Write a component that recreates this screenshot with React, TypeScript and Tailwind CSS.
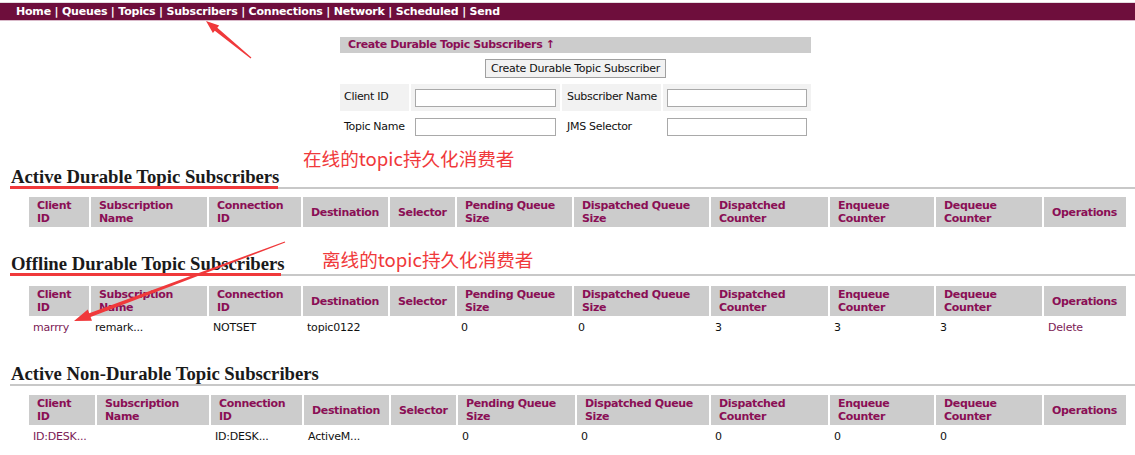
import React from "react";

const RED = "#f0393b";

function arrowPoints(tail: [number, number], tip: [number, number], w0: number, w1: number, headLen: number, headW: number) {
  const dx = tip[0] - tail[0];
  const dy = tip[1] - tail[1];
  const len = Math.hypot(dx, dy);
  const ux = dx / len;
  const uy = dy / len;
  const px = -uy;
  const py = ux;
  const bx = tip[0] - ux * headLen;
  const by = tip[1] - uy * headLen;
  const pts: [number, number][] = [
    [tail[0] + px * w0 / 2, tail[1] + py * w0 / 2],
    [bx + px * w1 / 2, by + py * w1 / 2],
    [bx + px * headW / 2, by + py * headW / 2],
    [tip[0], tip[1]],
    [bx - px * headW / 2, by - py * headW / 2],
    [bx - px * w1 / 2, by - py * w1 / 2],
    [tail[0] - px * w0 / 2, tail[1] - py * w0 / 2],
  ];
  return pts.map((p) => `${p[0].toFixed(1)},${p[1].toFixed(1)}`).join(" ");
}

function Th({ children, w }: { children: React.ReactNode; w: string }) {
  return (
    <th className={`${w} bg-[#cccccc] text-[#8a0f55] font-bold text-left align-middle px-[8px] py-[2px] leading-[13px] h-[29px] tracking-[-0.35px] whitespace-nowrap`}>
      {children}
    </th>
  );
}

function Table({ widths, rows }: { widths: string[]; rows: React.ReactNode[][] }) {
  const labels: React.ReactNode[] = [
    <>Client<br />ID</>,
    <>Subscription<br />Name</>,
    <>Connection<br />ID</>,
    "Destination",
    "Selector",
    <>Pending Queue<br />Size</>,
    <>Dispatched Queue<br />Size</>,
    <>Dispatched<br />Counter</>,
    <>Enqueue<br />Counter</>,
    <>Dequeue<br />Counter</>,
    "Operations",
  ];
  return (
    <table className="table-fixed border-separate border-spacing-[2px] ml-[27px] w-[1101px]">
      <thead>
        <tr>
          {labels.map((l, i) => (
            <Th key={i} w={widths[i]}>{l}</Th>
          ))}
        </tr>
      </thead>
      <tbody>
        {rows.map((r, ri) => (
          <tr key={ri}>
            {r.map((c, ci) => (
              <td key={ci} className="px-[4px] h-[20px] align-middle text-[#111] whitespace-nowrap tracking-[-0.2px]">{c}</td>
            ))}
          </tr>
        ))}
      </tbody>
    </table>
  );
}

function Heading({ children, red, redW }: { children: React.ReactNode; red?: boolean; redW?: string }) {
  return (
    <div className="ml-[10px] border-b-2 border-[#c8c8c8] h-[24px] relative">
      <h2 className="font-['Liberation_Serif',serif] font-bold text-[18.7px] leading-[24px] text-[#1a1a1a] pl-[1px] whitespace-nowrap">{children}</h2>
      {red && <div className={`absolute left-0 bottom-[-2px] h-[3px] bg-[#f0393b] ${redW}`} />}
    </div>
  );
}

const link = "text-[#7b1a55]";

export default function App() {
  const w1 = ["w-[60px]", "w-[116px]", "w-[92px]", "w-[85px]", "w-[65px]", "w-[115px]", "w-[135px]", "w-[117px]", "w-[104px]", "w-[106px]", "w-[82px]"];
  const w3 = ["w-[66px]", "w-[112px]", "w-[91px]", "w-[85px]", "w-[65px]", "w-[117px]", "w-[132px]", "w-[117px]", "w-[104px]", "w-[106px]", "w-[82px]"];
  return (
    <div className="relative w-[1135px] h-[455px] overflow-hidden bg-white font-['DejaVu_Sans',Verdana,sans-serif] text-[11px] text-[#111]">
      <div className="pt-[2px]">
        <div className="border-t border-[#e4dde0] h-[19px] bg-[#6e0e3c] border-b border-b-[#d9b9c9] text-white font-bold leading-[17px] pl-[16px] whitespace-nowrap tracking-[-0.2px]">
          Home | Queues | Topics | Subscribers | Connections | Network | Scheduled | Send
        </div>
      </div>

      {/* Create form */}
      <div className="ml-[340px] w-[471px] mt-[16px] tracking-[-0.3px]">
        <div className="h-[16px] bg-[#cccccc] text-[#8a0f55] font-bold leading-[16px] pl-[8px] tracking-[-0.38px]">
          Create Durable Topic Subscribers ↑
        </div>
        <div className="flex justify-center mt-[6px]">
          <button className="h-[19px] w-[181px] border border-[#a0a0a0] bg-[#f2f2f2] text-[#111] leading-[17px] px-[4px] whitespace-nowrap tracking-[-0.25px]">
            Create Durable Topic Subscriber
          </button>
        </div>
        <div className="mt-[6px] flex gap-[2px] h-[27px]">
          <div className="w-[69px] bg-[#f2f2f2] flex items-center pl-[4px]">Client ID</div>
          <div className="w-[149px] bg-[#f2f2f2] flex items-center pl-[4px]">
            <div className="w-[141px] h-[18px] border border-[#a9a9a9] bg-white" />
          </div>
          <div className="w-[99px] bg-[#f2f2f2] flex items-center pl-[5px] whitespace-nowrap">Subscriber Name</div>
          <div className="w-[148px] bg-[#f2f2f2] flex items-center pl-[4px]">
            <div className="w-[140px] h-[18px] border border-[#a9a9a9] bg-white" />
          </div>
        </div>
        <div className="mt-[2px] flex gap-[2px] h-[28px]">
          <div className="w-[69px] flex items-center pl-[4px] whitespace-nowrap">Topic Name</div>
          <div className="w-[149px] flex items-center pl-[4px]">
            <div className="w-[141px] h-[18px] border border-[#a9a9a9] bg-white" />
          </div>
          <div className="w-[99px] flex items-center pl-[5px] whitespace-nowrap">JMS Selector</div>
          <div className="w-[148px] flex items-center pl-[4px]">
            <div className="w-[140px] h-[18px] border border-[#a9a9a9] bg-white" />
          </div>
        </div>
      </div>

      {/* Active Durable */}
      <div className="mt-[24px] relative">
        <Heading red redW="w-[268px]">Active Durable Topic Subscribers</Heading>
        <div className="absolute left-[303px] top-[-17px] font-['Noto_Sans_CJK_SC',sans-serif] text-[18.6px] leading-[20px] whitespace-nowrap text-[#f0393b]">
          在线的topic持久化消费者
        </div>
        <div className="mt-[6px]">
          <Table widths={w1} rows={[]} />
        </div>
      </div>

      {/* Offline Durable */}
      <div className="mt-[23px] relative">
        <Heading red redW="w-[271px]">Offline Durable Topic Subscribers</Heading>
        <div className="absolute left-[322px] top-[-3px] font-['Noto_Sans_CJK_SC',sans-serif] text-[18.6px] leading-[20px] whitespace-nowrap text-[#f0393b]">
          离线的topic持久化消费者
        </div>
        <div className="mt-[8px]">
          <Table
            widths={w1}
            rows={[[
              <span className={link}>marrry</span>,
              "remark...",
              "NOTSET",
              "topic0122",
              "",
              "0",
              "0",
              "3",
              "3",
              "3",
              <span className={link}>Delete</span>,
            ]]}
          />
        </div>
      </div>

      {/* Active Non-Durable */}
      <div className="mt-[22px] relative">
        <Heading>Active Non-Durable Topic Subscribers</Heading>
        <div className="mt-[7px]">
          <Table
            widths={w3}
            rows={[[
              <span className={link}>ID:DESK...</span>,
              "",
              "ID:DESK...",
              "ActiveM...",
              "",
              "0",
              "0",
              "0",
              "0",
              "0",
              "",
            ]]}
          />
        </div>
      </div>

      <svg className="absolute left-0 top-0 pointer-events-none" width="1135" height="455">
        <polygon points={arrowPoints([251, 58], [206, 21], 1.2, 4, 13, 10)} fill={RED} />
        <polygon points={arrowPoints([285, 242], [74, 321], 1.2, 4, 17, 12)} fill={RED} />
      </svg>
    </div>
  );
}
